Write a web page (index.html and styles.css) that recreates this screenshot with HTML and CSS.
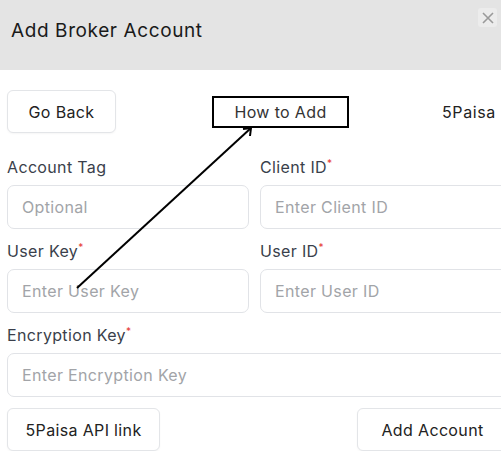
FILE: index.html
```html
<!DOCTYPE html>
<html lang="en">
<head>
    <meta charset="UTF-8">
    <meta name="viewport" content="width=device-width, initial-scale=1.0">
    <title>Add Broker Account</title>
    <link rel="stylesheet" href="styles.css">
</head>
<body>

    <div class="modal">
        <header class="modal-header">
            <h1>Add Broker Account</h1>
            <button class="close-btn" aria-label="Close">
                <svg width="12" height="12" viewBox="0 0 12 12">
                    <path d="M1 1 L11 11 M11 1 L1 11" stroke="#9a9a9a" stroke-width="1.6" fill="none"/>
                </svg>
            </button>
        </header>

        <section class="modal-body">
            <div class="top-row">
                <button class="btn">Go Back</button>
                <a class="how-to" href="#">How to Add</a>
                <span class="broker-name">5Paisa</span>
            </div>

            <div class="form-grid">
                <div class="field">
                    <label for="accountTag">Account Tag</label>
                    <input type="text" id="accountTag" placeholder="Optional">
                </div>
                <div class="field">
                    <label for="clientId">Client ID<span class="req">*</span></label>
                    <input type="text" id="clientId" placeholder="Enter Client ID">
                </div>
                <div class="field">
                    <label for="userKey">User Key<span class="req">*</span></label>
                    <input type="text" id="userKey" placeholder="Enter User Key">
                </div>
                <div class="field">
                    <label for="userId">User ID<span class="req">*</span></label>
                    <input type="text" id="userId" placeholder="Enter User ID">
                </div>
                <div class="field full">
                    <label for="encKey">Encryption Key<span class="req">*</span></label>
                    <input type="text" id="encKey" placeholder="Enter Encryption Key">
                </div>
            </div>

            <div class="bottom-row">
                <button class="btn api-btn">5Paisa API link</button>
                <button class="btn add-btn">Add Account</button>
            </div>
        </section>

        <!-- annotation arrow pointing at the how-to link -->
        <svg class="arrow" width="501" height="459" viewBox="0 0 501 459">
            <line x1="77" y1="288" x2="251" y2="128" stroke="#000" stroke-width="2"/>
            <path d="M243 129 L251 128 L250 136" stroke="#000" stroke-width="2" fill="none"/>
        </svg>
    </div>

</body>
</html>
```

FILE: styles.css
```css
body {
    margin: 0;
    overflow: hidden;
    background-color: #fff;
    font-family: 'Inter', 'Noto Sans', sans-serif;
    color: #222;
    letter-spacing: 0.35px;
}

.modal {
    position: relative;
    width: 515px;
}

.modal-header {
    position: relative;
    height: 70px;
    background-color: #e4e4e4;
}

.modal-header h1 {
    margin: 0;
    padding: 18px 0 0 11px;
    font-size: 19px;
    font-weight: 400;
    line-height: 26px;
    letter-spacing: 0.6px;
    color: #1a1a1a;
}

.close-btn {
    position: absolute;
    top: 8px;
    left: 478px;
    width: 19px;
    height: 19px;
    padding: 0;
    border: none;
    border-radius: 3px;
    background-color: #ececec;
    display: flex;
    align-items: center;
    justify-content: center;
}

.modal-body {
    padding: 20px 7px 0 7px;
}

.btn {
    height: 43px;
    padding: 0;
    border: 1px solid #e3e5e8;
    border-radius: 6px;
    background-color: #fff;
    font-family: inherit;
    font-size: 16px;
    letter-spacing: 0.35px;
    color: #222;
    box-shadow: 0 1px 2px rgba(0, 0, 0, 0.04);
}

.top-row {
    display: flex;
    align-items: center;
    height: 43px;
}

.top-row .btn {
    width: 109px;
}

.how-to {
    margin-left: 96px;
    width: 137px;
    height: 32px;
    box-sizing: border-box;
    border: 2px solid #000;
    display: flex;
    align-items: center;
    justify-content: center;
    font-size: 16px;
    color: #333;
    text-decoration: none;
}

.broker-name {
    margin-left: 93px;
    font-size: 16px;
    letter-spacing: 0.6px;
    color: #222;
}

.form-grid {
    display: grid;
    grid-template-columns: 242px 248px;
    column-gap: 11px;
    row-gap: 12px;
    margin-top: 24px;
}

.field {
    display: flex;
    flex-direction: column;
}

.field.full {
    grid-column: 1 / 3;
}

.field label {
    font-size: 16px;
    line-height: 20px;
    margin-bottom: 8px;
    color: #3a3f4b;
}

.req {
    color: #e53935;
    font-size: 10px;
    vertical-align: top;
    line-height: 12px;
}

.field input {
    height: 44px;
    box-sizing: border-box;
    padding: 0 14px;
    border: 1px solid #e1e3e7;
    border-radius: 7px;
    font-family: inherit;
    font-size: 16px;
    letter-spacing: 0.35px;
    color: #222;
}

.field input::placeholder {
    color: #a2a4a8;
}

.bottom-row {
    display: flex;
    justify-content: space-between;
    margin-top: 11px;
}

.api-btn {
    width: 153px;
}

.add-btn {
    width: 151px;
}

.arrow {
    position: absolute;
    top: 0;
    left: 0;
    pointer-events: none;
}
```
